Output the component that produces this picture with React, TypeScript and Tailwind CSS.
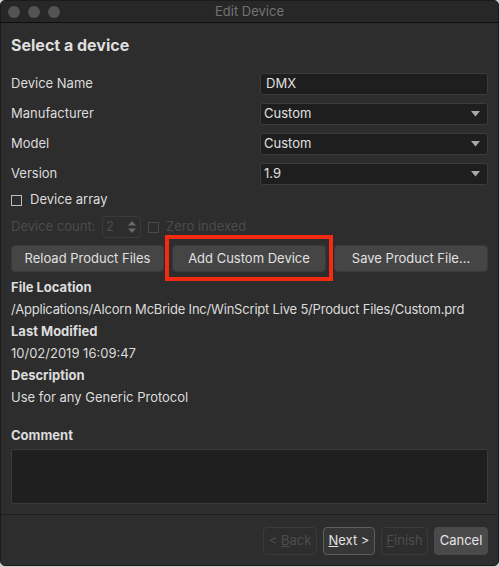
import React from "react";

const font = { fontFamily: "Inter, 'Liberation Sans', sans-serif" };

function Caret() {
  return (
    <svg width="9" height="6" viewBox="0 0 9 6" className="shrink-0">
      <path d="M0 0 H9 L4.5 5.5 Z" fill="#a8a8a8" />
    </svg>
  );
}

function Field({ value, select }: { value: string; select?: boolean }) {
  return (
    <div className="h-[22px] w-[228px] rounded-[3px] border border-[#3b3b3b] bg-[#1e1e1e] flex items-center justify-between pl-[3px] pr-[7px]">
      <span className={`text-[13px] text-[#e0e0e0] ${select ? "" : "pl-[2px]"}`}>{value}</span>
      {select && <Caret />}
    </div>
  );
}

function Row({ label, value, select }: { label: string; value: string; select?: boolean }) {
  return (
    <div className="flex items-center justify-between h-[30px] pr-[10px]">
      <span className="text-[13px] text-[#dcdcdc]">{label}</span>
      <Field value={value} select={select} />
    </div>
  );
}

function Checkbox({ disabled }: { disabled?: boolean }) {
  return (
    <span
      className={`inline-block w-[11px] h-[11px] border ${disabled ? "border-[#4a4a4a]" : "border-[#bdbdbd]"} bg-transparent`}
    />
  );
}

export default function App() {
  return (
    <div className="w-[500px] h-[567px] bg-[#cfcfcf]" style={font}>
      <div className="w-[499px] h-[566px] rounded-[5px] overflow-hidden bg-[#2d2d2d] border border-[#1b1b1b] flex flex-col">
        {/* Title bar */}
        <div className="h-[22px] bg-[#272727] border-b border-[#0d0d0d] flex items-center relative shrink-0">
          <div className="flex gap-[8px] pl-[7px]">
            <span className="w-[12px] h-[12px] rounded-full bg-[#545454]" />
            <span className="w-[12px] h-[12px] rounded-full bg-[#545454]" />
            <span className="w-[12px] h-[12px] rounded-full bg-[#545454]" />
          </div>
          <span className="absolute left-0 right-0 text-center text-[13px] text-[#727272]">Edit Device</span>
        </div>

        <div className="pl-[10px] flex flex-col flex-1">
          <h1 className="text-[16px] font-bold text-[#dedede] mt-[12px] h-[20px] leading-[20px]">Select a device</h1>

          <div className="mt-[14px]">
            <Row label="Device Name" value="DMX" />
            <Row label="Manufacturer" value="Custom" select />
            <Row label="Model" value="Custom" select />
            <Row label="Version" value="1.9" select />
          </div>

          <div className="flex items-center gap-[8px] h-[16px] mt-[3px]">
            <Checkbox />
            <span className="text-[13px] text-[#dcdcdc]">Device array</span>
          </div>

          <div className="flex items-center h-[24px] mt-[7px]">
            <span className="text-[13px] text-[#4b4b4b] w-[91px]">Device count:</span>
            <div className="w-[39px] h-[22px] rounded-[3px] border border-[#3a3a3a] flex items-center justify-between pl-[3px] pr-[4px]">
              <span className="text-[13px] text-[#4b4b4b]">2</span>
              <svg width="8" height="14" viewBox="0 0 8 14">
                <path d="M0 5.5 L4 1 L8 5.5 Z" fill="#6a6a6a" />
                <path d="M0 8.5 L4 13 L8 8.5 Z" fill="#6a6a6a" />
              </svg>
            </div>
            <span className="ml-[7px]">
              <Checkbox disabled />
            </span>
            <span className="ml-[7px] text-[13px] text-[#4b4b4b]">Zero indexed</span>
          </div>

          <div className="flex gap-[8px] mt-[6px] pr-[10px]">
            <button className="w-[153px] h-[27px] rounded-[4px] bg-[#454545] border border-[#3a3a3a] text-[13px] text-[#e0e0e0]">
              Reload Product Files
            </button>
            <div className="relative">
              <button className="w-[154px] h-[27px] rounded-[4px] bg-[#454545] border border-[#3a3a3a] text-[13px] text-[#e0e0e0]">
                Add Custom Device
              </button>
              <div className="absolute -left-[7px] -top-[10px] w-[168px] h-[46px] border-[4px] border-[#f52a12]" />
            </div>
            <button className="w-[154px] h-[27px] rounded-[4px] bg-[#454545] border border-[#3a3a3a] text-[13px] text-[#e0e0e0]">
              Save Product File...
            </button>
          </div>

          <div className="mt-[4px] flex flex-col text-[13px] text-[#dcdcdc]">
            <span className="font-bold h-[22px] leading-[22px]">File Location</span>
            <span className="h-[22px] leading-[22px] tracking-[-0.2px]">/Applications/Alcorn McBride Inc/WinScript Live 5/Product Files/Custom.prd</span>
            <span className="font-bold h-[22px] leading-[22px]">Last Modified</span>
            <span className="h-[22px] leading-[22px]">10/02/2019 16:09:47</span>
            <span className="font-bold h-[22px] leading-[22px]">Description</span>
            <span className="h-[22px] leading-[22px]">Use for any Generic Protocol</span>
          </div>

          <span className="mt-[16px] text-[13px] font-bold text-[#dcdcdc] h-[22px] leading-[22px]">Comment</span>
          <div className="mt-[3px] mr-[10px] h-[55px] bg-[#1f1f1f] border border-[#3a3a3a] rounded-[2px]" />
        </div>

        <div className="h-[1px] bg-[#1f1f1f] shrink-0" />

        <div className="flex justify-end gap-[6px] pr-[10px] pt-[12px] pb-[10px] shrink-0">
          <button className="w-[54px] h-[28px] rounded-[4px] border border-[#3a3a3a] bg-[#2d2d2d] text-[13px] text-[#4d4d4d]">
            &lt; <span className="underline">B</span>ack
          </button>
          <button className="w-[52px] h-[28px] rounded-[4px] border border-[#5e5e5e] bg-[#363636] text-[13px] text-[#e2e2e2]">
            <span className="underline">N</span>ext &gt;
          </button>
          <button className="w-[47px] h-[28px] rounded-[4px] border border-[#3a3a3a] bg-[#2d2d2d] text-[13px] text-[#4d4d4d]">
            <span className="underline">F</span>inish
          </button>
          <button className="w-[54px] h-[28px] rounded-[4px] border border-[#4a4a4a] bg-[#4a4a4a] text-[13px] text-[#e6e6e6]">
            Cancel
          </button>
        </div>
      </div>
    </div>
  );
}
